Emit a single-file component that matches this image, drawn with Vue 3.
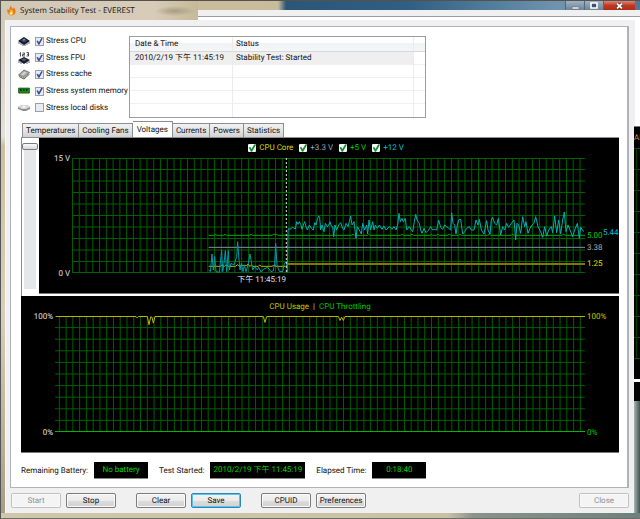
<script setup>
import { ref } from 'vue'

const stress = ref([
  { id: 'cpu', label: 'Stress CPU', on: true },
  { id: 'fpu', label: 'Stress FPU', on: true },
  { id: 'cache', label: 'Stress cache', on: true },
  { id: 'memory', label: 'Stress system memory', on: true },
  { id: 'disk', label: 'Stress local disks', on: false },
])

const log = [
  { time: '2010/2/19 下午 11:45:19', status: 'Stability Test: Started' },
  null,
  null,
  null,
  null,
]

const tabs = ['Temperatures', 'Cooling Fans', 'Voltages', 'Currents', 'Powers', 'Statistics']
const active = ref('Voltages')
const zoom = ref(0)

const rails = ref([
  { id: 'core', label: 'CPU Core', color: '#d8d800', on: true },
  { id: 'v33', label: '+3.3 V', color: '#98a4cc', on: true },
  { id: 'v5', label: '+5 V', color: '#00d000', on: true },
  { id: 'v12', label: '+12 V', color: '#00c8d0', on: true },
])

const readings = [
  { text: '5.00', color: '#00d000', top: 68, far: false },
  { text: '3.38', color: '#a8acb8', top: 78, far: false },
  { text: '1.25', color: '#e0e000', top: 92.5, far: false },
  { text: '5.44', color: '#00c0d0', top: 65, far: true },
]

const statuses = [
  { label: 'Remaining Battery:', value: 'No battery', size: 'short' },
  { label: 'Test Started:', value: '2010/2/19 下午 11:45:19', size: 'long' },
  { label: 'Elapsed Time:', value: '0:18:40', size: 'short' },
]

const columns = (first, count) => Array.from({ length: count }, (_, i) => first + i * 20.3)
const voltageColumns = columns(1.5, 76)
const usageColumns = columns(13, 78)
const rows = Array.from({ length: 9 }, (_, i) => i + 1)

const idle =
  '410,336 415,341 420,288 424,336 428,296 432,341 442,343 449,276 452,341 456,316 460,278 464,341 469,278 472,336 477,316 486,321 494,296 497,251 501,306 504,336 508,316 513,341 517,321 522,341 529,316 534,288 538,311 542,336 548,326 556,336 560,328 567,342 574,334 587,328 597,341 604,338 608,316 611,256 615,321 622,340 632,341 637,316 644,311 646,343 648,216'
const load =
  '648,216 650,212 654,214 662,208 670,213 674,191 678,199 682,191 686,199 690,214 694,201 698,191 702,206 706,216 712,201 718,211 724,216 728,194 732,201 736,184 740,174 743,178 746,216 750,201 756,221 760,196 766,206 770,201 774,191 778,204 782,206 785,236 789,201 794,216 800,201 806,194 812,211 816,216 822,196 828,206 832,191 836,174 840,201 846,191 852,241 856,206 862,216 868,228 872,196 878,216 884,201 887,228 891,186 896,216 902,191 906,216 910,201 916,211 922,201 930,214 936,204 942,216 952,206 960,214 966,206 972,216 977,201 981,166 985,191 990,181 994,191 1000,181 1004,216 1012,206 1022,221 1027,191 1031,169 1035,186 1039,191 1042,196 1046,216 1050,226 1056,211 1062,224 1070,216 1076,206 1082,216 1088,214 1094,216 1100,186 1106,208 1112,214 1118,201 1124,206 1130,211 1136,216 1139,164 1143,196 1148,201 1152,228 1156,201 1160,186 1166,184 1172,228 1178,221 1184,211 1192,206 1198,216 1206,216 1212,186 1218,201 1222,184 1228,216 1236,228 1244,188 1248,216 1254,228 1258,186 1262,178 1268,196 1274,201 1279,181 1286,231 1292,206 1298,216 1304,196 1310,208 1318,196 1326,186 1331,246 1335,196 1340,201 1346,226 1352,176 1358,206 1362,191 1368,226 1374,211 1380,201 1386,196 1391,176 1398,206 1406,221 1412,238 1418,206 1424,234 1430,216 1438,206 1442,224 1448,174 1454,224 1460,186 1466,228 1472,186 1477,162 1482,221 1488,201 1494,216 1502,236 1508,216 1516,196 1522,241 1526,208 1535,221'
</script>

<template>
  <div class="window">
    <header class="titlebar">
      <div class="caption">
        <svg class="flame" viewBox="0 0 20 22" aria-hidden="true">
          <path d="M8 0c1 4 4 5 5 8 1-2 2-3 2-4 3 3 4 6 4 10 0 5-4 8-9 8S1 18 1 14c0-2 0-4-1-6 2 0 4 1 5 3 0-4 2-7 3-11z" fill="#e8791c" />
          <path d="M9 7c1 3 4 5 5 8 1 4-2 6-5 6s-5-2-5-6c2 1 3 1 3-1 1-2 1-4 2-7z" fill="#fdc33c" />
          <path d="M9 14c2 2 3 3 2 5-1 2-4 1-4-1 0-1 1-2 2-4z" fill="#fff2a8" />
        </svg>
        <span>System Stability Test - EVEREST</span>
      </div>
      <div class="glass">
        <div class="controls">
          <button class="ctl" aria-label="Minimize"><svg viewBox="0 0 18 9"><path d="M6 6h7v2H6z" fill="#fff" stroke="#5b6470" stroke-width=".6" /></svg></button>
          <button class="ctl" aria-label="Maximize"><svg viewBox="0 0 18 9"><path d="M6 2h6v5H6z" fill="#405070" stroke="#fff" stroke-width="1.6" /></svg></button>
          <button class="ctl close" aria-label="Close window"><svg viewBox="0 0 32 9"><path d="M13.5 2.5l5 5m0-5l-5 5" fill="none" stroke="#5a2420" stroke-width="3.4" /><path d="M13.5 2.5l5 5m0-5l-5 5" fill="none" stroke="#fff" stroke-width="2" /></svg></button>
        </div>
        <div class="sliver"></div>
      </div>
    </header>

    <div class="middle">
      <main class="client">
        <section class="panel">
          <div class="top">
            <div class="stress">
              <label v-for="s in stress" :key="s.id" class="option">
                <svg v-if="s.id === 'cpu'" class="icon" viewBox="0 0 12 12"><path d="M0 6l6-4 6 4-6 4z" fill="#141a2c" /><path d="M1 7v2M3 8v2M5 9v2M7 9v2M9 8v2M11 7v2" stroke="#3a4258" stroke-width=".8" /><path d="M3 5.500l3-2 3 2-3 2z" fill="#46526e" /><path d="M5 5l2-1" stroke="#aab4cc" stroke-width=".8" /></svg>
                <svg v-else-if="s.id === 'fpu'" class="icon" viewBox="0 0 12 12"><path d="M1.500 1.500l1-1v4M4.500 1h2v1.500h-2V4h2.500M8.500.5h2V4h-2M9 2.300h1.500" fill="none" stroke="#222" stroke-width=".8" /><path d="M0 8l6-3 6 3-6 4z" fill="#141a2c" /><path d="M3 7.500l3-1.500 3 1.500-3 2z" fill="#46526e" /><path d="M1 9v2M3 10v2M9 10v2M11 9v2" stroke="#3a4258" stroke-width=".8" /></svg>
                <svg v-else-if="s.id === 'cache'" class="icon" viewBox="0 0 12 12"><path d="M.5 7L6 2l5.500 2.500L6 9.500z" fill="#aaa9a2" stroke="#55564f" stroke-width=".7" /><path d="M1 8.500l5 2.500 5.500-5" fill="none" stroke="#55564f" /><path d="M3 6.500l3.500-3 2 1L5 7.500z" fill="#d4d3cc" /></svg>
                <svg v-else-if="s.id === 'memory'" class="icon" viewBox="0 0 12 12"><path d="M.5 3h11v5H.5z" fill="#178a20" stroke="#0b4810" stroke-width=".6" /><path d="M2 4h1.500v2H2zM5 4h1.500v2H5zM8 4h1.500v2H8z" fill="#06280a" /><path d="M1 8.500h10" stroke="#9a9a40" stroke-dasharray="1 .5" /></svg>
                <svg v-else class="icon" viewBox="0 0 12 12"><path d="M0 5l4-2h5l3 2v2L8 9H5L0 7z" fill="#8e8e8e" /><path d="M0 5l4-2h5l3 2-4 2H4z" fill="#d8d8d8" /><ellipse cx="6" cy="4.800" rx="2" ry=".9" fill="#fafafa" /></svg>
                <input v-model="s.on" type="checkbox" class="tick" />
                <span>{{ s.label }}</span>
              </label>
            </div>
            <table class="log">
              <colgroup><col class="c-time" /><col class="c-status" /><col /></colgroup>
              <thead>
                <tr><th>Date &amp; Time</th><th>Status</th><th></th></tr>
              </thead>
              <tbody>
                <tr v-for="(row, i) in log" :key="i" :class="{ filled: row }">
                  <td>{{ row?.time }}</td><td>{{ row?.status }}</td><td></td>
                </tr>
              </tbody>
            </table>
          </div>

          <nav class="tabs" role="tablist">
            <button v-for="t in tabs" :key="t" role="tab" class="tab" :class="{ active: t === active }" :aria-selected="t === active" @click="active = t">{{ t }}</button>
          </nav>

          <div class="sheet">
            <input v-model="zoom" class="zoom" type="range" min="0" max="100" aria-label="Chart scale" />
            <div class="chart voltage">
              <div class="legend">
                <label v-for="r in rails" :key="r.id" class="rail" :style="{ color: r.color }">
                  <input v-model="r.on" type="checkbox" class="tick green" />{{ r.label }}
                </label>
              </div>
              <div class="axis"><span>15 V</span><span>0 V</span></div>
              <svg class="plot" viewBox="0 0 1539 345" preserveAspectRatio="none">
                <g class="grid">
                  <path v-for="x in voltageColumns" :key="x" :d="`M${x} 0V345`" />
                  <path v-for="n in rows" :key="n" :d="`M0 ${n * 34.5}H1539`" />
                  <path d="M0 1.500H1539M0 343.500H1539" />
                </g>
                <path class="line" d="M410 232H427l4-3 4 3h20l4-3 4 3H532l5-3 5 3H600l4-3h10l4 3H838l5-3 5 3h40l3-3 4 3H985l5-3 5 3h20l5-3 5 3H1074l4-3 4 3h12l4-3 5 3h24l5-3 5 3h22l5-3 5 3h78l5-3 5 3h60l5-3 5 3H1406l5 3 5-3h54l5-3 5 3H1539" stroke="#00a800" />
                <path class="line" d="M410 268H1539" stroke="#8490b4" />
                <path class="line" d="M410 325H445l6-5 6 5 6-4 6 4h22l5-5 6 5 8-3h14l4-4 5 7 5-3 5 3h16l4-4 5 4H600l6-3 6 3H640l8-7" stroke="#b4b400" />
                <path class="line core" d="M648 318H1539" stroke="#827800" />
                <polyline class="line" :points="idle" stroke="#009ca8" />
                <polyline class="line" :points="load" stroke="#00b0b8" />
                <path class="line marker" d="M643 0V345" stroke="#e0e0e0" />
              </svg>
              <div class="values">
                <span v-for="v in readings" :key="v.text" class="reading" :class="{ far: v.far }" :style="{ top: v.top + '%', color: v.color }">{{ v.text }}</span>
              </div>
              <div class="stamp">下午 11:45:19</div>
            </div>
          </div>

          <div class="chart usage">
            <div class="legend"><span class="y">CPU Usage</span><span class="bar">|</span><span class="g">CPU Throttling</span></div>
            <div class="axis"><span>100%</span><span>0%</span></div>
            <svg class="plot" viewBox="0 0 1590 348" preserveAspectRatio="none">
              <g class="grid">
                <path v-for="x in usageColumns" :key="x" :d="`M${x} 0V348`" />
                <path v-for="n in rows" :key="n" :d="`M0 ${n * 34.8}H1590`" />
              </g>
              <path class="line" d="M0 346.500H1590" stroke="#00b400" />
              <path class="line" d="M2 1.500H243l3 4 4-4H277l5 25 5-24 4 1 4 18 5-20H625l5 18 5-18H850l5 12 5-10 5 10 5-12H1590" stroke="#b8b400" />
            </svg>
            <div class="axis right"><span class="y">100%</span><span class="g">0%</span></div>
          </div>

          <div class="status">
            <div v-for="s in statuses" :key="s.label" class="item">
              <span>{{ s.label }}</span><output class="lcd" :class="s.size">{{ s.value }}</output>
            </div>
          </div>
        </section>

        <footer class="actions">
          <div class="pair"><button class="btn" disabled>Start</button><button class="btn">Stop</button></div>
          <div class="pair"><button class="btn">Clear</button><button class="btn focus">Save</button></div>
          <div class="pair"><button class="btn">CPUID</button><button class="btn">Preferences</button></div>
          <button class="btn last" disabled>Close</button>
        </footer>
      </main>

      <aside class="behind">
        <div class="blank"></div>
        <div class="trace">Al</div>
        <div class="dark"></div>
      </aside>
    </div>
  </div>
</template>

<style>
body { margin: 0; }
</style>

<style scoped>
* { box-sizing: border-box; }
.window {
  min-height: 100vh;
  display: flex;
  flex-direction: column;
  padding-left: 5px;
  padding-bottom: 6px;
  overflow: hidden;
  border-top: 1px solid #55524e;
  font-family: Roboto, "Noto Sans CJK TC", sans-serif;
  font-size: 8px;
  line-height: 12px;
  text-rendering: geometricPrecision;
  color: #111;
  background:
    linear-gradient(#555, #555) left / 1px 100% no-repeat,
    linear-gradient(#6e6e68, #6e6e68) bottom / 100% 1px no-repeat,
    linear-gradient(90deg, #cfc6ac, #c9c0a6 70%, #8a938c 74%, #6e817e) bottom / 100% 6px no-repeat,
    linear-gradient(#d0c6b2, #e6e1d6 26%, #cdbf9f 28%, #d8cfba 60%, #a59c84);
}
button, input { font: inherit; color: inherit; margin: 0; padding: 0; text-rendering: inherit; }

.titlebar { display: flex; height: 19px; margin-left: -4px; background: linear-gradient(90deg, #d2c8b6, #d6ccb8 24%, #c4b692 32%); }
.caption { display: flex; align-items: center; gap: 4px; width: 197px; flex: none; padding-left: 6px; font-family: "Open Sans", sans-serif; white-space: nowrap; background: radial-gradient(ellipse 20px 5px at 174px 10px, #a79b82, transparent); }
.flame { width: 9px; height: 11px; }
.glass { flex: 1; display: flex; flex-direction: column; background: linear-gradient(90deg, #cabd9c 0, #c8bc9c 80px, #2b5678 88px, #2f5f82 210px, #6f94b0 360px, #537594); }
.controls { display: flex; justify-content: flex-end; height: 9px; padding-right: 5px; }
.ctl { width: 19px; height: 9px; border: 0; border-left: 1px solid #56687c; background: linear-gradient(#9fb2c4, #6d8398); display: block; }
.ctl svg { display: block; width: 100%; height: 9px; }
.ctl.close { width: 32px; background: linear-gradient(#d88878, #c03820 50%, #b02c18); }
.sliver { flex: 1; border-top: 6px solid #f0f0f0; background: linear-gradient(#9c9ca4, #9c9ca4) top / 100% 1px no-repeat, #fff; }

.middle { flex: 1; display: flex; }
.client { flex: 1; min-width: 0; display: flex; flex-direction: column; background: #f0f0f0; border-left: 1px solid #f8f8f8; padding: 6px 5px 0 4px; }
.panel { flex: 1; display: flex; flex-direction: column; background: #fff; border: 1px solid #b0b2ba; border-right-width: 2px; padding: 6px 8px 0 10px; }

.top { display: flex; height: 82px; }
.stress { display: grid; grid-template-rows: repeat(5, 1fr); width: 111px; height: 83px; margin-left: -3px; flex: none; }
.option { display: flex; align-items: center; white-space: nowrap; }
.icon { width: 12px; height: 12px; margin-right: 5px; flex: none; }
.tick { appearance: none; width: 9px; height: 9px; flex: none; margin-right: 2px; border: 1px solid #98a0a8; background: #e8ecf2; }
.tick:checked::before { content: ""; display: block; width: 7px; height: 7px; background: #3c4c98; clip-path: polygon(6% 45%, 26% 38%, 42% 62%, 76% 4%, 98% 8%, 48% 98%, 34% 98%); }

.log { width: 297px; height: 81px; margin-top: 3px; table-layout: fixed; border-collapse: separate; border-spacing: 0; border: 1px solid #9a9ca4; text-align: left; }
.c-time { width: 103px; }
.c-status { width: 181px; }
.log th, .log td { padding: 0 0 0 5px; height: 13px; border-bottom: 1px solid #f0f0f0; border-right: 1px solid #ececec; white-space: nowrap; line-height: 12px; }
.log td + td, .log th + th { padding-left: 3px; }
.log th { height: 15px; font-weight: 400; background: linear-gradient(#fff 45%, #f1f2f4 46%, #f5f6f8); border-bottom-color: #d5d7da; }
.log th:last-child, .log td:last-child { border-right: 0; }
.log tr:last-child td { border-bottom: 0; }
.log .filled td { background: #efefef; border-bottom: 1px solid #efefef; }
.log .filled td:last-child { background: #fff; }

.tabs { display: flex; align-items: flex-end; height: 16px; margin-top: 6px; padding-left: 1px; }
.tab { height: 14px; padding: 0 3px; line-height: 12px; border: 1px solid #8c8e94; border-bottom: 0; background: linear-gradient(#f2f2f2, #e4e4e4 50%, #d2d2d2); white-space: nowrap; }
.tab + .tab { border-left: 0; }
.tab.active { height: 16px; padding: 0 4px; background: #fff; }

.sheet { display: flex; border-top: 1px solid #8c8e94; border-left: 1px solid #8c8e94; padding-bottom: 2px; }
.zoom { appearance: none; writing-mode: vertical-lr; width: 16px; height: 146px; margin: 5px 1px 0 0; background: linear-gradient(90deg, transparent 2px, #e4e8ea 2px, #e4e8ea 14px, transparent 14px); flex: none; }
.zoom::-webkit-slider-thumb { appearance: none; width: 16px; height: 7px; border: 1px solid #7c7c7c; border-radius: 2px; background: linear-gradient(#fafafa, #d8d8d8); }

.chart { display: grid; background: #000; border-bottom: 1px solid #77777c; color: #e0e0e0; flex: 1; min-width: 0; }
.voltage { grid-template: 20px 115px 20px / 33px 1fr 34px; }
.usage { flex: none; grid-template: 20px 116px 20px / 34px 1fr 34px; }
.legend { grid-column: 1 / -1; display: flex; align-items: center; justify-content: center; gap: 6px; padding-right: 6px; }
.usage .legend { gap: 4px; padding: 2px 0 0; }
.rail { display: flex; align-items: center; }
.tick.green { width: 8px; height: 8px; margin-right: 3px; border: 0; border-radius: 1px; background: #f4f8fc; }
.tick.green:checked::before { width: 8px; height: 8px; background: #18902c; }
.axis { display: flex; flex-direction: column; justify-content: space-between; text-align: right; padding-right: 2px; margin: -5px 0 -7px; white-space: nowrap; }
.axis.right { text-align: left; padding: 0 0 0 2px; }
.plot { width: 100%; height: 100%; display: block; }
.grid path { stroke: #006000; stroke-width: 1; vector-effect: non-scaling-stroke; fill: none; }
.line { fill: none; stroke-width: 1; vector-effect: non-scaling-stroke; }
.line.core { stroke-width: 2; }
.line.marker { stroke-dasharray: 2 2; }
.values { position: relative; }
.reading { position: absolute; left: 2px; line-height: 12px; margin-top: -6px; }
.reading.far { left: 18px; }
.stamp { grid-column: 2; justify-self: start; width: 214px; text-align: right; padding-top: 1px; white-space: nowrap; }
.y { color: #c8c800; }
.g { color: #00c800; }
.bar { color: #c0c0c0; }

.status { display: flex; gap: 11px; padding: 9px 0 8px; }
.item { display: flex; align-items: center; gap: 6px; white-space: nowrap; }
.lcd { display: block; height: 17px; line-height: 16px; text-align: center; background: #000; color: #00d400; border-bottom: 1px solid #888; }
.lcd.short { width: 54px; }
.lcd.long { width: 95px; }

.actions { display: flex; gap: 20px; padding: 5px 0; }
.pair { display: flex; gap: 5px; padding-left: 1px; margin-right: -1px; }
.btn { width: 50px; height: 15px; line-height: 12px; border: 1px solid #7c7c7c; border-radius: 2px; background: linear-gradient(#f4f4f4, #ebebeb 50%, #dcdcdc 51%, #d2d2d2); box-shadow: inset 0 0 0 1px #fafafa; white-space: nowrap; }
.btn:disabled { color: #909090; border-color: #c0c0c0; background: #f4f4f4; }
.btn.focus { border-color: #2c88b8; box-shadow: inset 0 0 0 1px #5cc4ec; }
.last { margin-left: auto; }

.behind { width: 6px; flex: none; display: flex; flex-direction: column; overflow: hidden; background: linear-gradient(90deg, #a8b4b0, #748480 50%, #485c5c 90%); }
.blank { height: 106px; background: #fff; border-left: 1px solid #f0f0f0; }
.trace { height: 253px; padding-top: 5px; color: #c08848; border-top: 1px solid #777; background: linear-gradient(90deg, transparent 2px, #003c00 2px, #003c00 3px, transparent 3px) 0 21px / 100% 210px no-repeat, repeating-linear-gradient(#005000 0, #005000 1px, transparent 1px, transparent 21px) 0 21px / 100% 212px no-repeat, #000; }
.dark { height: 22px; border-top: 3px solid #fff; background: #000; }
</style>
